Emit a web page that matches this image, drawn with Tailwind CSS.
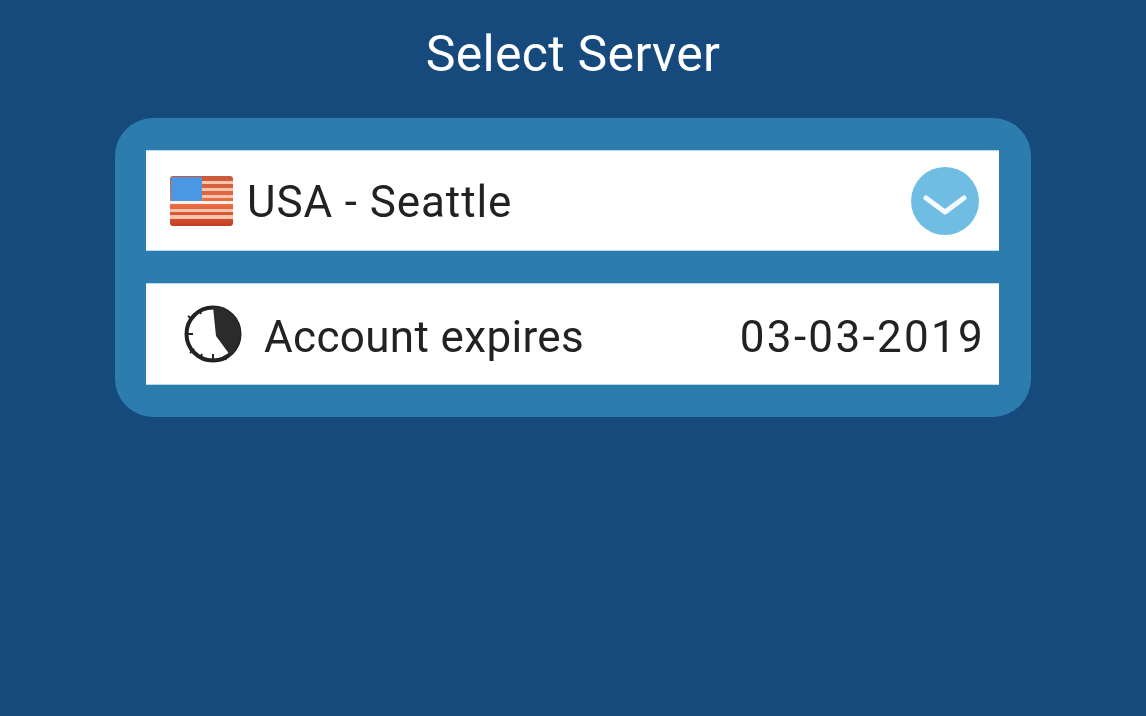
<!DOCTYPE html>
<html lang="en">

<head>
    <meta charset="UTF-8" />
    <title>Select Server</title>
    <script src="https://cdn.jsdelivr.net/npm/@tailwindcss/browser@4"></script>
</head>

<body class="bg-[#174a7c] h-[716px] overflow-hidden font-['Roboto',sans-serif]">
    <div class="blur-[0.7px]">
        <h1 class="h-[118px] pt-[25px] text-center text-[50px] leading-[58px] tracking-[0.3px] text-white">Select Server</h1>

        <div class="mx-[115px] h-[299px] rounded-[38px] bg-[#2c7dae] pl-[31px] pr-[32px] pt-[32px] flex flex-col gap-[32px]">
            <!-- Server row -->
            <div class="h-[101px] bg-white flex items-center pl-[24px] pr-[20px] border-y border-[#b5dcee]">
                <svg class="w-[63px] h-[50px] shrink-0" viewBox="0 0 63 50">
                    <defs>
                        <linearGradient id="flagFade" x1="0" y1="0" x2="0" y2="1">
                            <stop offset="0" stop-color="#c9583a" />
                            <stop offset="0.55" stop-color="#ee6f48" />
                            <stop offset="1" stop-color="#c23d1f" />
                        </linearGradient>
                    </defs>
                    <rect x="0" y="0" width="63" height="50" rx="3" fill="url(#flagFade)" />
                    <rect x="31" y="5" width="32" height="3" fill="#f8c4ac" />
                    <rect x="31" y="12" width="32" height="3" fill="#f8c4ac" />
                    <rect x="31" y="19" width="32" height="3" fill="#f8c4ac" />
                    <rect x="0" y="25" width="63" height="3" fill="#fff0e6" />
                    <rect x="0" y="33" width="63" height="3" fill="#f8c4ac" />
                    <rect x="0" y="39" width="63" height="4" fill="#f8c4ac" />
                    <rect x="1" y="1" width="31" height="24" fill="#4a97e4" />
                </svg>
                <span class="ml-[14px] pt-[2px] text-[44px] leading-none tracking-[0.9px] text-[#222]">USA - Seattle</span>
                <span class="ml-auto w-[68px] h-[68px] rounded-full bg-[#70bde3] flex items-center justify-center">
                    <svg class="w-[68px] h-[68px]" viewBox="0 0 68 68" fill="none">
                        <path d="M15 31 L34 45 L53 31" stroke="#f4fbfe" stroke-width="5" stroke-linecap="round" stroke-linejoin="round" />
                    </svg>
                </span>
            </div>

            <!-- Expiry row -->
            <div class="h-[102px] bg-white flex items-center pl-[37px] pr-[14px] border-y border-[#b5dcee]">
                <svg class="w-[60px] h-[60px] shrink-0" viewBox="0 0 60 60">
                    <circle cx="30" cy="30" r="26.5" fill="#fff" stroke="#222" stroke-width="4" />
                    <path d="M30 3 A27 27 0 0 1 47 51 L33 32 Z" fill="#2b2b2b" />
                    <path d="M30 50 V57 M10 30 H3 M9 15 L5 12 M11 45 L7 49 M19 50 L17 54 M41 52 L43 56 M18 10 L16 6" stroke="#222" stroke-width="2" />
                </svg>
                <span class="ml-[21px] pt-[6px] text-[44px] leading-none tracking-[0.35px] text-[#222]">Account expires</span>
                <span class="ml-auto pt-[6px] text-[44px] leading-none tracking-[2.3px] text-[#222]">03-03-2019</span>
            </div>
        </div>
    </div>
</body>

</html>
